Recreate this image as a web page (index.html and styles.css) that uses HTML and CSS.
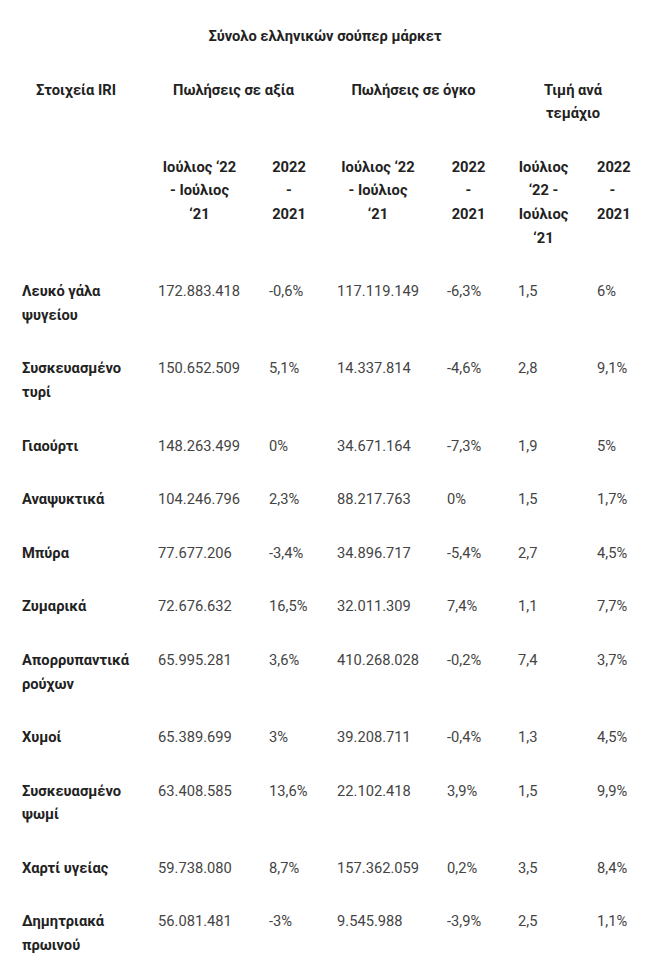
FILE: index.html
```html
<!DOCTYPE html>
<html lang="el">
<head>
<meta charset="utf-8">
<title>Σύνολο ελληνικών σούπερ μάρκετ</title>
<link rel="stylesheet" href="styles.css">
</head>
<body>
<table class="iri">
  <caption class="iri-title">Σύνολο ελληνικών σούπερ μάρκετ</caption>
  <colgroup>
    <col class="c1"><col class="c2"><col class="c3"><col class="c4"><col class="c5"><col class="c6"><col class="c7">
  </colgroup>
  <thead>
    <tr>
      <th>Στοιχεία IRI</th>
      <th colspan="2">Πωλήσεις σε αξία</th>
      <th colspan="2">Πωλήσεις σε όγκο</th>
      <th colspan="2">Τιμή ανά<br>τεμάχιο</th>
    </tr>
    <tr>
      <th></th>
      <th>Ιούλιος ‘22<br>- Ιούλιος<br>‘21</th>
      <th>2022<br>-<br>2021</th>
      <th>Ιούλιος ‘22<br>- Ιούλιος<br>‘21</th>
      <th>2022<br>-<br>2021</th>
      <th>Ιούλιος<br>‘22 -<br>Ιούλιος<br>‘21</th>
      <th>2022<br>-<br>2021</th>
    </tr>
  </thead>
  <tbody>
    <tr><th>Λευκό γάλα ψυγείου</th><td>172.883.418</td><td>-0,6%</td><td>117.119.149</td><td>-6,3%</td><td>1,5</td><td>6%</td></tr>
    <tr><th>Συσκευασμένο τυρί</th><td>150.652.509</td><td>5,1%</td><td>14.337.814</td><td>-4,6%</td><td>2,8</td><td>9,1%</td></tr>
    <tr><th>Γιαούρτι</th><td>148.263.499</td><td>0%</td><td>34.671.164</td><td>-7,3%</td><td>1,9</td><td>5%</td></tr>
    <tr><th>Αναψυκτικά</th><td>104.246.796</td><td>2,3%</td><td>88.217.763</td><td>0%</td><td>1,5</td><td>1,7%</td></tr>
    <tr><th>Μπύρα</th><td>77.677.206</td><td>-3,4%</td><td>34.896.717</td><td>-5,4%</td><td>2,7</td><td>4,5%</td></tr>
    <tr><th>Ζυμαρικά</th><td>72.676.632</td><td>16,5%</td><td>32.011.309</td><td>7,4%</td><td>1,1</td><td>7,7%</td></tr>
    <tr><th>Απορρυπαντικά ρούχων</th><td>65.995.281</td><td>3,6%</td><td>410.268.028</td><td>-0,2%</td><td>7,4</td><td>3,7%</td></tr>
    <tr><th>Χυμοί</th><td>65.389.699</td><td>3%</td><td>39.208.711</td><td>-0,4%</td><td>1,3</td><td>4,5%</td></tr>
    <tr><th>Συσκευασμένο ψωμί</th><td>63.408.585</td><td>13,6%</td><td>22.102.418</td><td>3,9%</td><td>1,5</td><td>9,9%</td></tr>
    <tr><th>Χαρτί υγείας</th><td>59.738.080</td><td>8,7%</td><td>157.362.059</td><td>0,2%</td><td>3,5</td><td>8,4%</td></tr>
    <tr><th>Δημητριακά πρωινού</th><td>56.081.481</td><td>-3%</td><td>9.545.988</td><td>-3,9%</td><td>2,5</td><td>1,1%</td></tr>
  </tbody>
</table>
</body>
</html>
```

FILE: styles.css
```css
html, body {
  margin: 0;
  background: #ffffff;
}

body {
  padding: 10px 8px 8px;
  font-family: Roboto, "Noto Sans", "DejaVu Sans", sans-serif;
  font-size: 14.7px;
  line-height: 23.6px;
  color: #444444;
}

.iri {
  border-collapse: collapse;
  border-spacing: 0;
  table-layout: fixed;
  width: 634px;
}

.iri-title {
  padding: 15px 14px;
  font-weight: 700;
  color: #222222;
  text-align: center;
}

.c1 { width: 136px; }
.c2 { width: 111px; }
.c3 { width: 68px; }
.c4 { width: 110px; }
.c5 { width: 71px; }
.c6 { width: 79px; }
.c7 { width: 59px; }

.iri th,
.iri td {
  padding: 15px 14px;
  vertical-align: top;
}

.iri thead th {
  font-weight: 700;
  color: #222222;
  text-align: center;
}

.iri tbody th {
  font-weight: 700;
  color: #222222;
  text-align: left;
}

.iri tbody td {
  font-weight: 400;
  color: #444444;
  text-align: left;
  white-space: nowrap;
}
```
